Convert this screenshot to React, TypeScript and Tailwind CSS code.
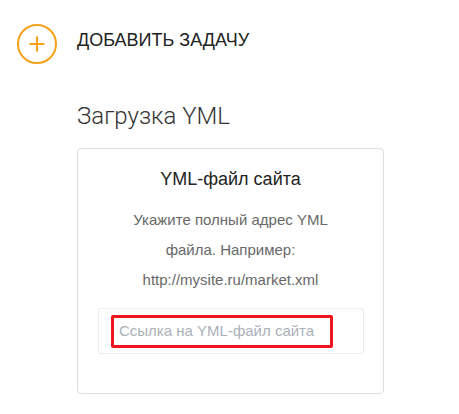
import React from 'react';

// Orange "+" circle used for the add-task button
function PlusCircle() {
  return (
    <svg width="40" height="40" viewBox="0 0 40 40" fill="none">
      <circle cx="20" cy="20" r="19" stroke="#f7a11a" strokeWidth="2" />
      <path d="M20 12.5v15M12.5 20h15" stroke="#f7a11a" strokeWidth="2" />
    </svg>
  );
}

export default function App() {
  return (
    <div className="w-[459px] h-[414px] bg-white overflow-hidden font-['Liberation_Sans',Arial,sans-serif]">
      {/* Add task */}
      <div className="flex items-center pl-[17px] pt-[24px] gap-[20px]">
        <PlusCircle />
        <span className="text-[18px] text-[#222] -mt-[8px] leading-none">ДОБАВИТЬ ЗАДАЧУ</span>
      </div>

      <div className="pl-[77px]">
        <h2 className="mt-[38px] text-[24px] leading-[28px] font-light text-[#333] font-['Roboto',sans-serif]">
          Загрузка YML
        </h2>

        {/* YML card */}
        <div className="mt-[18px] w-[307px] h-[246px] border border-[#dedede] rounded-[4px] flex flex-col items-center">
          <div className="mt-[18px] text-[18px] leading-[24px] text-[#222]">YML-файл сайта</div>
          <p className="mt-[14px] w-[230px] text-center text-[15px] leading-[30px] text-[#686868]">
            Укажите полный адрес YML файла. Например: http://mysite.ru/market.xml
          </p>
          <div className="relative mt-[13px] ml-[1px] w-[266px] h-[46px] border border-[#ececec] rounded-[2px] flex items-center pl-[20px]">
            <span className="text-[15px] text-[#aab1b9]">Ссылка на YML-файл сайта</span>
            {/* highlight frame */}
            <div className="absolute left-[12px] top-[6px] w-[222px] h-[33px] border-[3px] border-[#f0141e] rounded-[2px]" />
          </div>
        </div>
      </div>
    </div>
  );
}
